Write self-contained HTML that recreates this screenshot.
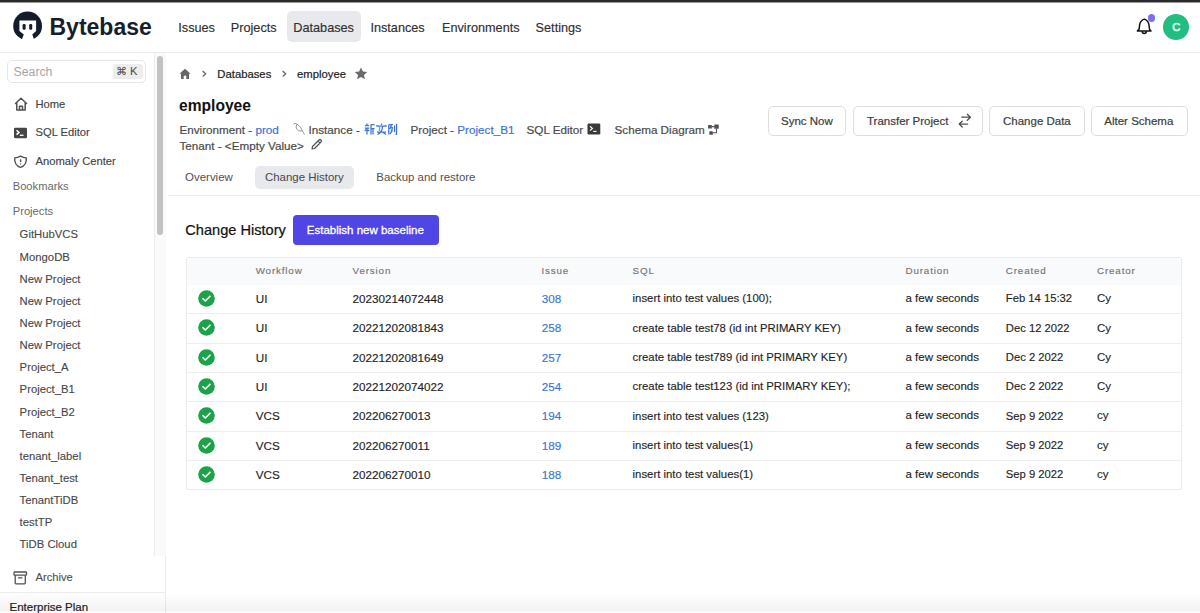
<!DOCTYPE html>
<html><head><meta charset="utf-8"><style>
html,body{margin:0;padding:0;width:1200px;height:613px;overflow:hidden;background:#fff;}
body{position:relative;font-family:'Liberation Sans', sans-serif;}
.t{position:absolute;white-space:nowrap;}
.r{position:absolute;}
</style></head><body>
<div class="r" style="left:0px;top:0px;width:1200px;height:1.5px;background:#2a2a2a;"></div>
<div class="r" style="left:0px;top:1.5px;width:1200px;height:1px;background:#9a9a9a;"></div>
<div class="r" style="left:0px;top:52px;width:1200px;height:1px;background:#ececec;"></div>
<svg class="r" style="left:10px;top:8px" width="36" height="36" viewBox="0 0 36 36">
<circle cx="17.6" cy="17.9" r="14.4" fill="#141c2b"/>
<path d="M9.4 12.6 H26.1 V22.9 L22.3 26.4 L24.6 33 V36 H11.3 V33 L13.8 26.4 L9.4 22.9 Z" fill="#fff"/>
<rect x="12.6" y="16.1" width="3" height="5.6" rx="1.2" fill="#141c2b"/>
<rect x="19.2" y="16.1" width="3" height="5.6" rx="1.2" fill="#141c2b"/>
</svg>
<div class="t" style="left:49.50px;top:16.45px;font-size:23px;line-height:23px;color:#161d2c;font-weight:700;">Bytebase</div>
<div class="r" style="left:287px;top:11px;width:74px;height:31px;background:#e8e9ec;border-radius:5px;"></div>
<div class="t" style="left:178.30px;top:21.50px;font-size:12.7px;line-height:12.7px;color:#303030;-webkit-text-stroke:0.15px #303030;">Issues</div>
<div class="t" style="left:230.80px;top:21.50px;font-size:12.7px;line-height:12.7px;color:#303030;-webkit-text-stroke:0.15px #303030;">Projects</div>
<div class="t" style="left:293.30px;top:21.50px;font-size:12.7px;line-height:12.7px;color:#303030;-webkit-text-stroke:0.15px #303030;">Databases</div>
<div class="t" style="left:370.40px;top:21.50px;font-size:12.7px;line-height:12.7px;color:#303030;-webkit-text-stroke:0.15px #303030;">Instances</div>
<div class="t" style="left:442.00px;top:21.50px;font-size:12.7px;line-height:12.7px;color:#303030;-webkit-text-stroke:0.15px #303030;">Environments</div>
<div class="t" style="left:535.60px;top:21.50px;font-size:12.7px;line-height:12.7px;color:#303030;-webkit-text-stroke:0.15px #303030;">Settings</div>
<svg class="r" style="left:1134px;top:16px" width="20" height="20" viewBox="0 0 20 20">
<path d="M3.4 14.9 H17 L15.5 13.2 Q15.2 11 15 9 Q14.5 4.6 10.3 3.1 Q6.1 4.6 5.6 9 Q5.4 11 5.1 13.2 Z" fill="none" stroke="#111" stroke-width="1.5" stroke-linejoin="round"/>
<path d="M8.1 15.3 A2.15 2.15 0 0 0 12.4 15.3" fill="none" stroke="#111" stroke-width="1.4"/>
</svg>
<div class="r" style="left:1147.7px;top:14.3px;width:7.5px;height:7.5px;background:#7b70ee;border-radius:50%;"></div>
<div class="r" style="left:1163px;top:14px;width:26px;height:25.5px;background:#22bd80;border-radius:50%;"></div>
<div class="t" style="left:1172.30px;top:21.78px;font-size:11.2px;line-height:11.2px;color:#d8fff0;-webkit-text-stroke:0.6px #d8fff0;">C</div>
<div class="r" style="left:165px;top:53px;width:1px;height:560px;background:#ececec;"></div>
<div class="r" style="left:153.5px;top:53px;width:12px;height:503px;background:#fafafa;border-left:1px solid #ececec;box-sizing:border-box;"></div>
<div class="r" style="left:157px;top:56px;width:5.5px;height:178.5px;background:#c2c2c2;border-radius:3px;"></div>
<div class="r" style="left:7px;top:60px;width:139px;height:23px;border:1px solid #e6e6e6;border-radius:5px;box-sizing:border-box;background:#fff;"></div>
<div class="t" style="left:13.50px;top:65.84px;font-size:12.3px;line-height:12.3px;color:#a6a6a6;">Search</div>
<div class="r" style="left:113px;top:64px;width:30px;height:15px;background:#ededed;border-radius:3px;"></div>
<div class="t" style="left:116.00px;top:65.98px;font-size:11.2px;line-height:11.2px;color:#4a4a4a;">&#8984; K</div>
<div class="t" style="left:35.50px;top:98.88px;font-size:11.2px;line-height:11.2px;color:#444444;-webkit-text-stroke:0.15px #444444;">Home</div>
<div class="t" style="left:35.50px;top:127.48px;font-size:11.2px;line-height:11.2px;color:#444444;-webkit-text-stroke:0.15px #444444;">SQL Editor</div>
<div class="t" style="left:35.50px;top:155.88px;font-size:11.2px;line-height:11.2px;color:#444444;-webkit-text-stroke:0.15px #444444;">Anomaly Center</div>
<div class="t" style="left:12.70px;top:181.48px;font-size:11.2px;line-height:11.2px;color:#6a6a6a;">Bookmarks</div>
<div class="t" style="left:12.70px;top:206.48px;font-size:11.2px;line-height:11.2px;color:#6a6a6a;">Projects</div>
<div class="t" style="left:19.60px;top:229.40px;font-size:11.3px;line-height:11.3px;color:#484848;-webkit-text-stroke:0.12px #484848;">GitHubVCS</div>
<div class="t" style="left:19.60px;top:251.53px;font-size:11.3px;line-height:11.3px;color:#484848;-webkit-text-stroke:0.12px #484848;">MongoDB</div>
<div class="t" style="left:19.60px;top:273.67px;font-size:11.3px;line-height:11.3px;color:#484848;-webkit-text-stroke:0.12px #484848;">New Project</div>
<div class="t" style="left:19.60px;top:295.81px;font-size:11.3px;line-height:11.3px;color:#484848;-webkit-text-stroke:0.12px #484848;">New Project</div>
<div class="t" style="left:19.60px;top:317.95px;font-size:11.3px;line-height:11.3px;color:#484848;-webkit-text-stroke:0.12px #484848;">New Project</div>
<div class="t" style="left:19.60px;top:340.09px;font-size:11.3px;line-height:11.3px;color:#484848;-webkit-text-stroke:0.12px #484848;">New Project</div>
<div class="t" style="left:19.60px;top:362.24px;font-size:11.3px;line-height:11.3px;color:#484848;-webkit-text-stroke:0.12px #484848;">Project_A</div>
<div class="t" style="left:19.60px;top:384.38px;font-size:11.3px;line-height:11.3px;color:#484848;-webkit-text-stroke:0.12px #484848;">Project_B1</div>
<div class="t" style="left:19.60px;top:406.51px;font-size:11.3px;line-height:11.3px;color:#484848;-webkit-text-stroke:0.12px #484848;">Project_B2</div>
<div class="t" style="left:19.60px;top:428.65px;font-size:11.3px;line-height:11.3px;color:#484848;-webkit-text-stroke:0.12px #484848;">Tenant</div>
<div class="t" style="left:19.60px;top:450.79px;font-size:11.3px;line-height:11.3px;color:#484848;-webkit-text-stroke:0.12px #484848;">tenant_label</div>
<div class="t" style="left:19.60px;top:472.94px;font-size:11.3px;line-height:11.3px;color:#484848;-webkit-text-stroke:0.12px #484848;">Tenant_test</div>
<div class="t" style="left:19.60px;top:495.07px;font-size:11.3px;line-height:11.3px;color:#484848;-webkit-text-stroke:0.12px #484848;">TenantTiDB</div>
<div class="t" style="left:19.60px;top:517.21px;font-size:11.3px;line-height:11.3px;color:#484848;-webkit-text-stroke:0.12px #484848;">testTP</div>
<div class="t" style="left:19.60px;top:539.36px;font-size:11.3px;line-height:11.3px;color:#484848;-webkit-text-stroke:0.12px #484848;">TiDB Cloud</div>
<svg class="r" style="left:13px;top:96px" width="16" height="16" viewBox="0 0 16 16">
<path d="M2.5 7.5 L8 2.3 L13.5 7.5 M3.8 6.5 V14 H12.2 V6.5 M6.5 14 V10.3 H9.5 V14" fill="none" stroke="#505050" stroke-width="1.5" stroke-linejoin="round" stroke-linecap="round"/>
</svg>
<svg class="r" style="left:13px;top:127px" width="16" height="12" viewBox="0 0 16 12">
<rect x="1" y="0.8" width="13" height="10.4" rx="1.3" fill="#454545"/>
<path d="M3.5 3.2 L6 5.4 L3.5 7.6" fill="none" stroke="#fff" stroke-width="1.5"/>
<path d="M6.8 8.3 H10.5" stroke="#fff" stroke-width="1.3"/>
</svg>
<svg class="r" style="left:13px;top:155px" width="16" height="14" viewBox="0 0 16 14">
<path d="M7.5 1.2 Q10.5 2.9 13.3 2.9 Q13.9 10.4 7.5 12.4 Q1.1 10.4 1.7 2.9 Q4.5 2.9 7.5 1.2 Z" fill="none" stroke="#505050" stroke-width="1.4" stroke-linejoin="round"/>
<path d="M7.6 5 V6.4" stroke="#555" stroke-width="1.5" stroke-linecap="round"/>
<circle cx="7.6" cy="8.9" r="0.75" fill="#777"/>
</svg>
<svg class="r" style="left:13px;top:571px" width="15" height="14" viewBox="0 0 15 14">
<rect x="1" y="1" width="12.5" height="3.2" rx="0.6" fill="none" stroke="#505050" stroke-width="1.3"/>
<path d="M2.2 4.2 V12 Q2.2 12.8 3 12.8 H11.5 Q12.3 12.8 12.3 12 V4.2" fill="none" stroke="#505050" stroke-width="1.3"/>
<path d="M5.5 6.8 H9" stroke="#505050" stroke-width="1.3" stroke-linecap="round"/>
</svg>
<div class="t" style="left:35.50px;top:572.28px;font-size:11.2px;line-height:11.2px;color:#505050;-webkit-text-stroke:0.12px #505050;">Archive</div>
<div class="r" style="left:0px;top:592px;width:165px;height:1px;background:#ececec;"></div>
<div class="t" style="left:9.50px;top:601.73px;font-size:11.5px;line-height:11.5px;color:#222222;-webkit-text-stroke:0.2px #222222;">Enterprise Plan</div>
<svg class="r" style="left:179px;top:68px" width="12" height="12" viewBox="0 0 12 12">
<path d="M6 0.8 L11.5 5.8 H10 V11 H7.3 V8 Q6 6.8 4.7 8 V11 H2 V5.8 H0.5 Z" fill="#666666"/>
</svg>
<svg class="r" style="left:200px;top:70px" width="8" height="9" viewBox="0 0 8 9"><path d="M2.6 1 L5.7 3.7 L2.8 6.5" fill="none" stroke="#6a6a6a" stroke-width="1.3"/></svg>
<div class="t" style="left:217.30px;top:68.59px;font-size:11.3px;line-height:11.3px;color:#222222;-webkit-text-stroke:0.2px #222222;">Databases</div>
<svg class="r" style="left:280px;top:70px" width="8" height="9" viewBox="0 0 8 9"><path d="M2.6 1 L5.7 3.7 L2.8 6.5" fill="none" stroke="#6a6a6a" stroke-width="1.3"/></svg>
<div class="t" style="left:297.00px;top:68.59px;font-size:11.3px;line-height:11.3px;color:#222222;-webkit-text-stroke:0.2px #222222;">employee</div>
<svg class="r" style="left:354px;top:67px" width="14" height="13" viewBox="0 0 14 13">
<path d="M7 0.6 L8.9 4.5 L13.2 5 L10 7.9 L10.9 12.2 L7 10 L3.1 12.2 L4 7.9 L0.8 5 L5.1 4.5 Z" fill="#6a6a6a"/>
</svg>
<div class="t" style="left:179.00px;top:97.54px;font-size:15.6px;line-height:15.6px;color:#111111;font-weight:700;">employee</div>
<div class="t" style="left:179.40px;top:123.56px;font-size:11.7px;line-height:11.7px;color:#4a4a4a;-webkit-text-stroke:0.2px #4a4a4a;">Environment - <span style="color:#3b74d6;-webkit-text-stroke:0.2px #3b74d6">prod</span></div>
<svg class="r" style="left:292px;top:122px" width="14" height="14" viewBox="0 0 14 14">
<path d="M1.5 2 Q3 0.8 5 2 Q9 4.5 10.5 9 L12.5 12.5 M5 2 Q3.5 5 4.5 7 Q6 9.5 10.5 9" fill="none" stroke="#8a9099" stroke-width="0.9"/>
</svg>
<div class="t" style="left:308.50px;top:123.56px;font-size:11.7px;line-height:11.7px;color:#4a4a4a;-webkit-text-stroke:0.2px #4a4a4a;">Instance - </div>
<svg class="r" style="left:364px;top:123px" width="34" height="12" viewBox="0 0 34 12" fill="none" stroke="#3b74d6" stroke-width="1.25">
<path d="M1 2.5 H5 M3 0.5 V2.5 M0.8 5 H5.3 M3 5 V11.5 M0.8 8 L2.3 6.5 M5 8 L3.8 6.8 M7 1.5 V11.5 M7 1.5 H10.5 M7 5.5 H10.5 M9 5.5 V11.5"/>
<path d="M13 2 V3 H22 V2 M17.5 0.5 V2 M15 4.5 L16 5.5 M15 6.5 L16 7.5 M13 9 H22 M18.5 3.5 Q18.5 9 13.5 11.5 M18.5 9 L22 11.5"/>
<path d="M25.5 1 L24.5 4 M24.8 3 V11.5 M26 1.5 H29 M27.5 1.5 L26 6 M26.5 4.5 H29 M28.5 4.5 Q28 9 26 11 M27 7 L28.5 8.5 M30.5 2.5 V9 M32.5 0.8 V11 Q32.5 11.5 31.5 11.5"/>
</svg>
<div class="t" style="left:410.50px;top:123.56px;font-size:11.7px;line-height:11.7px;color:#4a4a4a;-webkit-text-stroke:0.2px #4a4a4a;">Project - <span style="color:#3b74d6;-webkit-text-stroke:0.2px #3b74d6">Project_B1</span></div>
<div class="t" style="left:526.50px;top:123.56px;font-size:11.7px;line-height:11.7px;color:#4a4a4a;-webkit-text-stroke:0.2px #4a4a4a;">SQL Editor</div>
<svg class="r" style="left:587px;top:123px" width="14" height="12" viewBox="0 0 14 12">
<rect x="0.5" y="0.5" width="12.8" height="11" rx="1.2" fill="#3a3a3a"/>
<path d="M3 3.2 L5.4 5.4 L3 7.6" fill="none" stroke="#fff" stroke-width="1.2"/>
<path d="M6.2 8.4 H9.5" stroke="#fff" stroke-width="1.1"/>
</svg>
<div class="t" style="left:614.50px;top:123.56px;font-size:11.7px;line-height:11.7px;color:#4a4a4a;-webkit-text-stroke:0.2px #4a4a4a;">Schema Diagram</div>
<svg class="r" style="left:704px;top:120px" width="20" height="18" viewBox="0 0 20 18" fill="#505050">
<rect x="4.1" y="5" width="3.7" height="3.5" rx="0.5"/><rect x="10.3" y="4.4" width="4.4" height="4.4" rx="0.5"/><rect x="5.3" y="11.2" width="3.5" height="3.5" rx="0.5"/>
<path d="M7.5 6.6 H10.5 M12.5 8.5 V12.8 H8.5" stroke="#505050" stroke-width="1.1" fill="none"/>
</svg>
<div class="t" style="left:179.40px;top:139.56px;font-size:11.7px;line-height:11.7px;color:#4a4a4a;-webkit-text-stroke:0.2px #4a4a4a;">Tenant - &lt;Empty Value&gt;</div>
<svg class="r" style="left:310px;top:138px" width="13" height="13" viewBox="0 0 13 13">
<path d="M2 11 L2.5 8.5 L9 2 Q10 1 11 2 Q12 3 11 4 L4.5 10.5 Z M8 3 L10 5" fill="none" stroke="#4b5058" stroke-width="1.2" stroke-linejoin="round"/>
</svg>
<div class="r" style="left:768px;top:105.5px;width:78px;height:30px;border:1px solid #dedede;border-radius:5px;box-sizing:border-box;background:#fff;"></div>
<div class="t" style="left:781.00px;top:115.82px;font-size:11.5px;line-height:11.5px;color:#3c3c3c;-webkit-text-stroke:0.2px #3c3c3c;">Sync Now</div>
<div class="r" style="left:853px;top:105.5px;width:129.5px;height:30px;border:1px solid #dedede;border-radius:5px;box-sizing:border-box;background:#fff;"></div>
<div class="t" style="left:867.00px;top:115.82px;font-size:11.5px;line-height:11.5px;color:#3c3c3c;-webkit-text-stroke:0.2px #3c3c3c;">Transfer Project</div>
<svg class="r" style="left:950px;top:108px" width="30" height="24" viewBox="0 0 30 24" fill="none" stroke="#505050" stroke-width="1.3" stroke-linecap="round" stroke-linejoin="round">
<path d="M11.8 9.2 H20.4 M17.3 6.3 L20.4 9.2 L17.3 12.2 M17.6 16.1 H9.2 M12.2 13.3 L9.2 16.1 L12.2 19"/>
</svg>
<div class="r" style="left:989px;top:105.5px;width:95.5px;height:30px;border:1px solid #dedede;border-radius:5px;box-sizing:border-box;background:#fff;"></div>
<div class="t" style="left:1003.00px;top:115.82px;font-size:11.5px;line-height:11.5px;color:#3c3c3c;-webkit-text-stroke:0.2px #3c3c3c;">Change Data</div>
<div class="r" style="left:1090.5px;top:105.5px;width:97.5px;height:30px;border:1px solid #dedede;border-radius:5px;box-sizing:border-box;background:#fff;"></div>
<div class="t" style="left:1104.30px;top:115.82px;font-size:11.5px;line-height:11.5px;color:#3c3c3c;-webkit-text-stroke:0.2px #3c3c3c;">Alter Schema</div>
<div class="r" style="left:255px;top:166px;width:98.5px;height:22.5px;background:#e8e9ec;border-radius:5px;"></div>
<div class="t" style="left:185.10px;top:172.27px;font-size:11.45px;line-height:11.45px;color:#505050;">Overview</div>
<div class="t" style="left:265.00px;top:172.27px;font-size:11.45px;line-height:11.45px;color:#464646;">Change History</div>
<div class="t" style="left:376.30px;top:172.27px;font-size:11.45px;line-height:11.45px;color:#505050;">Backup and restore</div>
<div class="r" style="left:168px;top:195px;width:1032px;height:1px;background:#ececec;"></div>
<div class="t" style="left:185.30px;top:222.89px;font-size:14.6px;line-height:14.6px;color:#111111;-webkit-text-stroke:0.2px #111111;">Change History</div>
<div class="r" style="left:293px;top:214.5px;width:146px;height:30px;background:#5046e5;border-radius:4px;"></div>
<div class="t" style="left:306.80px;top:224.62px;font-size:11.5px;line-height:11.5px;color:#ffffff;-webkit-text-stroke:0.3px #ffffff;">Establish new baseline</div>
<div class="r" style="left:186px;top:257px;width:995.5px;height:232.5px;border:1px solid #ebebeb;box-sizing:border-box;border-radius:2px;"></div>
<div class="r" style="left:187px;top:258px;width:993.5px;height:27px;background:#f9fafb;"></div>
<div class="t" style="left:255.70px;top:266.27px;font-size:9.8px;line-height:9.8px;color:#757575;letter-spacing:0.85px;-webkit-text-stroke:0.15px #757575;">Workflow</div>
<div class="t" style="left:352.60px;top:266.27px;font-size:9.8px;line-height:9.8px;color:#757575;letter-spacing:0.85px;-webkit-text-stroke:0.15px #757575;">Version</div>
<div class="t" style="left:541.50px;top:266.27px;font-size:9.8px;line-height:9.8px;color:#757575;letter-spacing:0.85px;-webkit-text-stroke:0.15px #757575;">Issue</div>
<div class="t" style="left:632.60px;top:266.27px;font-size:9.8px;line-height:9.8px;color:#757575;letter-spacing:0.85px;-webkit-text-stroke:0.15px #757575;">SQL</div>
<div class="t" style="left:905.50px;top:266.27px;font-size:9.8px;line-height:9.8px;color:#757575;letter-spacing:0.85px;-webkit-text-stroke:0.15px #757575;">Duration</div>
<div class="t" style="left:1005.80px;top:266.27px;font-size:9.8px;line-height:9.8px;color:#757575;letter-spacing:0.85px;-webkit-text-stroke:0.15px #757575;">Created</div>
<div class="t" style="left:1097.00px;top:266.27px;font-size:9.8px;line-height:9.8px;color:#757575;letter-spacing:0.85px;-webkit-text-stroke:0.15px #757575;">Creator</div>
<svg class="r" style="left:198px;top:290.1px" width="17" height="17" viewBox="0 0 17 17"><circle cx="8.5" cy="8.5" r="8.3" fill="#1ca34a"/><path d="M4.9 8.7 L7.3 11 L12 6.2" fill="none" stroke="#fff" stroke-width="1.6" stroke-linecap="round" stroke-linejoin="round"/></svg>
<div class="t" style="left:255.70px;top:293.06px;font-size:11.7px;line-height:11.7px;color:#1f1f1f;-webkit-text-stroke:0.15px #1f1f1f;">UI</div>
<div class="t" style="left:352.60px;top:293.06px;font-size:11.7px;line-height:11.7px;color:#1f1f1f;-webkit-text-stroke:0.15px #1f1f1f;">20230214072448</div>
<div class="t" style="left:541.80px;top:293.06px;font-size:11.7px;line-height:11.7px;color:#3b74d6;-webkit-text-stroke:0.15px #3b74d6;">308</div>
<div class="t" style="left:632.60px;top:293.35px;font-size:11.35px;line-height:11.35px;color:#1f1f1f;-webkit-text-stroke:0.15px #1f1f1f;">insert into test values (100);</div>
<div class="t" style="left:905.50px;top:293.23px;font-size:11.5px;line-height:11.5px;color:#1f1f1f;-webkit-text-stroke:0.15px #1f1f1f;">a few seconds</div>
<div class="t" style="left:1005.80px;top:293.44px;font-size:11.25px;line-height:11.25px;color:#1f1f1f;-webkit-text-stroke:0.15px #1f1f1f;">Feb 14 15:32</div>
<div class="t" style="left:1097.00px;top:293.23px;font-size:11.5px;line-height:11.5px;color:#1f1f1f;-webkit-text-stroke:0.15px #1f1f1f;">Cy</div>
<div class="r" style="left:187px;top:313.4px;width:993.5px;height:1px;background:#efefef;"></div>
<svg class="r" style="left:198px;top:319.4px" width="17" height="17" viewBox="0 0 17 17"><circle cx="8.5" cy="8.5" r="8.3" fill="#1ca34a"/><path d="M4.9 8.7 L7.3 11 L12 6.2" fill="none" stroke="#fff" stroke-width="1.6" stroke-linecap="round" stroke-linejoin="round"/></svg>
<div class="t" style="left:255.70px;top:322.36px;font-size:11.7px;line-height:11.7px;color:#1f1f1f;-webkit-text-stroke:0.15px #1f1f1f;">UI</div>
<div class="t" style="left:352.60px;top:322.36px;font-size:11.7px;line-height:11.7px;color:#1f1f1f;-webkit-text-stroke:0.15px #1f1f1f;">20221202081843</div>
<div class="t" style="left:541.80px;top:322.36px;font-size:11.7px;line-height:11.7px;color:#3b74d6;-webkit-text-stroke:0.15px #3b74d6;">258</div>
<div class="t" style="left:632.60px;top:322.65px;font-size:11.35px;line-height:11.35px;color:#1f1f1f;-webkit-text-stroke:0.15px #1f1f1f;">create table test78 (id int PRIMARY KEY)</div>
<div class="t" style="left:905.50px;top:322.53px;font-size:11.5px;line-height:11.5px;color:#1f1f1f;-webkit-text-stroke:0.15px #1f1f1f;">a few seconds</div>
<div class="t" style="left:1005.80px;top:322.74px;font-size:11.25px;line-height:11.25px;color:#1f1f1f;-webkit-text-stroke:0.15px #1f1f1f;">Dec 12 2022</div>
<div class="t" style="left:1097.00px;top:322.53px;font-size:11.5px;line-height:11.5px;color:#1f1f1f;-webkit-text-stroke:0.15px #1f1f1f;">Cy</div>
<div class="r" style="left:187px;top:342.7px;width:993.5px;height:1px;background:#efefef;"></div>
<svg class="r" style="left:198px;top:348.7px" width="17" height="17" viewBox="0 0 17 17"><circle cx="8.5" cy="8.5" r="8.3" fill="#1ca34a"/><path d="M4.9 8.7 L7.3 11 L12 6.2" fill="none" stroke="#fff" stroke-width="1.6" stroke-linecap="round" stroke-linejoin="round"/></svg>
<div class="t" style="left:255.70px;top:351.66px;font-size:11.7px;line-height:11.7px;color:#1f1f1f;-webkit-text-stroke:0.15px #1f1f1f;">UI</div>
<div class="t" style="left:352.60px;top:351.66px;font-size:11.7px;line-height:11.7px;color:#1f1f1f;-webkit-text-stroke:0.15px #1f1f1f;">20221202081649</div>
<div class="t" style="left:541.80px;top:351.66px;font-size:11.7px;line-height:11.7px;color:#3b74d6;-webkit-text-stroke:0.15px #3b74d6;">257</div>
<div class="t" style="left:632.60px;top:351.95px;font-size:11.35px;line-height:11.35px;color:#1f1f1f;-webkit-text-stroke:0.15px #1f1f1f;">create table test789 (id int PRIMARY KEY)</div>
<div class="t" style="left:905.50px;top:351.83px;font-size:11.5px;line-height:11.5px;color:#1f1f1f;-webkit-text-stroke:0.15px #1f1f1f;">a few seconds</div>
<div class="t" style="left:1005.80px;top:352.04px;font-size:11.25px;line-height:11.25px;color:#1f1f1f;-webkit-text-stroke:0.15px #1f1f1f;">Dec 2 2022</div>
<div class="t" style="left:1097.00px;top:351.83px;font-size:11.5px;line-height:11.5px;color:#1f1f1f;-webkit-text-stroke:0.15px #1f1f1f;">Cy</div>
<div class="r" style="left:187px;top:372.0px;width:993.5px;height:1px;background:#efefef;"></div>
<svg class="r" style="left:198px;top:378.0px" width="17" height="17" viewBox="0 0 17 17"><circle cx="8.5" cy="8.5" r="8.3" fill="#1ca34a"/><path d="M4.9 8.7 L7.3 11 L12 6.2" fill="none" stroke="#fff" stroke-width="1.6" stroke-linecap="round" stroke-linejoin="round"/></svg>
<div class="t" style="left:255.70px;top:380.95px;font-size:11.7px;line-height:11.7px;color:#1f1f1f;-webkit-text-stroke:0.15px #1f1f1f;">UI</div>
<div class="t" style="left:352.60px;top:380.95px;font-size:11.7px;line-height:11.7px;color:#1f1f1f;-webkit-text-stroke:0.15px #1f1f1f;">20221202074022</div>
<div class="t" style="left:541.80px;top:380.95px;font-size:11.7px;line-height:11.7px;color:#3b74d6;-webkit-text-stroke:0.15px #3b74d6;">254</div>
<div class="t" style="left:632.60px;top:381.25px;font-size:11.35px;line-height:11.35px;color:#1f1f1f;-webkit-text-stroke:0.15px #1f1f1f;">create table test123 (id int PRIMARY KEY);</div>
<div class="t" style="left:905.50px;top:381.12px;font-size:11.5px;line-height:11.5px;color:#1f1f1f;-webkit-text-stroke:0.15px #1f1f1f;">a few seconds</div>
<div class="t" style="left:1005.80px;top:381.34px;font-size:11.25px;line-height:11.25px;color:#1f1f1f;-webkit-text-stroke:0.15px #1f1f1f;">Dec 2 2022</div>
<div class="t" style="left:1097.00px;top:381.12px;font-size:11.5px;line-height:11.5px;color:#1f1f1f;-webkit-text-stroke:0.15px #1f1f1f;">Cy</div>
<div class="r" style="left:187px;top:401.3px;width:993.5px;height:1px;background:#efefef;"></div>
<svg class="r" style="left:198px;top:407.3px" width="17" height="17" viewBox="0 0 17 17"><circle cx="8.5" cy="8.5" r="8.3" fill="#1ca34a"/><path d="M4.9 8.7 L7.3 11 L12 6.2" fill="none" stroke="#fff" stroke-width="1.6" stroke-linecap="round" stroke-linejoin="round"/></svg>
<div class="t" style="left:255.70px;top:410.25px;font-size:11.7px;line-height:11.7px;color:#1f1f1f;-webkit-text-stroke:0.15px #1f1f1f;">VCS</div>
<div class="t" style="left:352.60px;top:410.25px;font-size:11.7px;line-height:11.7px;color:#1f1f1f;-webkit-text-stroke:0.15px #1f1f1f;">202206270013</div>
<div class="t" style="left:541.80px;top:410.25px;font-size:11.7px;line-height:11.7px;color:#3b74d6;-webkit-text-stroke:0.15px #3b74d6;">194</div>
<div class="t" style="left:632.60px;top:410.55px;font-size:11.35px;line-height:11.35px;color:#1f1f1f;-webkit-text-stroke:0.15px #1f1f1f;">insert into test values (123)</div>
<div class="t" style="left:905.50px;top:410.43px;font-size:11.5px;line-height:11.5px;color:#1f1f1f;-webkit-text-stroke:0.15px #1f1f1f;">a few seconds</div>
<div class="t" style="left:1005.80px;top:410.64px;font-size:11.25px;line-height:11.25px;color:#1f1f1f;-webkit-text-stroke:0.15px #1f1f1f;">Sep 9 2022</div>
<div class="t" style="left:1097.00px;top:410.43px;font-size:11.5px;line-height:11.5px;color:#1f1f1f;-webkit-text-stroke:0.15px #1f1f1f;">cy</div>
<div class="r" style="left:187px;top:430.6px;width:993.5px;height:1px;background:#efefef;"></div>
<svg class="r" style="left:198px;top:436.6px" width="17" height="17" viewBox="0 0 17 17"><circle cx="8.5" cy="8.5" r="8.3" fill="#1ca34a"/><path d="M4.9 8.7 L7.3 11 L12 6.2" fill="none" stroke="#fff" stroke-width="1.6" stroke-linecap="round" stroke-linejoin="round"/></svg>
<div class="t" style="left:255.70px;top:439.56px;font-size:11.7px;line-height:11.7px;color:#1f1f1f;-webkit-text-stroke:0.15px #1f1f1f;">VCS</div>
<div class="t" style="left:352.60px;top:439.56px;font-size:11.7px;line-height:11.7px;color:#1f1f1f;-webkit-text-stroke:0.15px #1f1f1f;">202206270011</div>
<div class="t" style="left:541.80px;top:439.56px;font-size:11.7px;line-height:11.7px;color:#3b74d6;-webkit-text-stroke:0.15px #3b74d6;">189</div>
<div class="t" style="left:632.60px;top:439.85px;font-size:11.35px;line-height:11.35px;color:#1f1f1f;-webkit-text-stroke:0.15px #1f1f1f;">insert into test values(1)</div>
<div class="t" style="left:905.50px;top:439.73px;font-size:11.5px;line-height:11.5px;color:#1f1f1f;-webkit-text-stroke:0.15px #1f1f1f;">a few seconds</div>
<div class="t" style="left:1005.80px;top:439.94px;font-size:11.25px;line-height:11.25px;color:#1f1f1f;-webkit-text-stroke:0.15px #1f1f1f;">Sep 9 2022</div>
<div class="t" style="left:1097.00px;top:439.73px;font-size:11.5px;line-height:11.5px;color:#1f1f1f;-webkit-text-stroke:0.15px #1f1f1f;">cy</div>
<div class="r" style="left:187px;top:459.9px;width:993.5px;height:1px;background:#efefef;"></div>
<svg class="r" style="left:198px;top:465.9px" width="17" height="17" viewBox="0 0 17 17"><circle cx="8.5" cy="8.5" r="8.3" fill="#1ca34a"/><path d="M4.9 8.7 L7.3 11 L12 6.2" fill="none" stroke="#fff" stroke-width="1.6" stroke-linecap="round" stroke-linejoin="round"/></svg>
<div class="t" style="left:255.70px;top:468.86px;font-size:11.7px;line-height:11.7px;color:#1f1f1f;-webkit-text-stroke:0.15px #1f1f1f;">VCS</div>
<div class="t" style="left:352.60px;top:468.86px;font-size:11.7px;line-height:11.7px;color:#1f1f1f;-webkit-text-stroke:0.15px #1f1f1f;">202206270010</div>
<div class="t" style="left:541.80px;top:468.86px;font-size:11.7px;line-height:11.7px;color:#3b74d6;-webkit-text-stroke:0.15px #3b74d6;">188</div>
<div class="t" style="left:632.60px;top:469.15px;font-size:11.35px;line-height:11.35px;color:#1f1f1f;-webkit-text-stroke:0.15px #1f1f1f;">insert into test values(1)</div>
<div class="t" style="left:905.50px;top:469.03px;font-size:11.5px;line-height:11.5px;color:#1f1f1f;-webkit-text-stroke:0.15px #1f1f1f;">a few seconds</div>
<div class="t" style="left:1005.80px;top:469.24px;font-size:11.25px;line-height:11.25px;color:#1f1f1f;-webkit-text-stroke:0.15px #1f1f1f;">Sep 9 2022</div>
<div class="t" style="left:1097.00px;top:469.03px;font-size:11.5px;line-height:11.5px;color:#1f1f1f;-webkit-text-stroke:0.15px #1f1f1f;">cy</div>
<div class="r" style="left:0px;top:593px;width:1200px;height:18px;background:linear-gradient(to bottom, rgba(0,0,0,0), rgba(0,0,0,0.05));"></div>
<div class="r" style="left:0px;top:611px;width:1200px;height:2px;background:rgba(0,0,0,0.025);"></div>
</body></html>
